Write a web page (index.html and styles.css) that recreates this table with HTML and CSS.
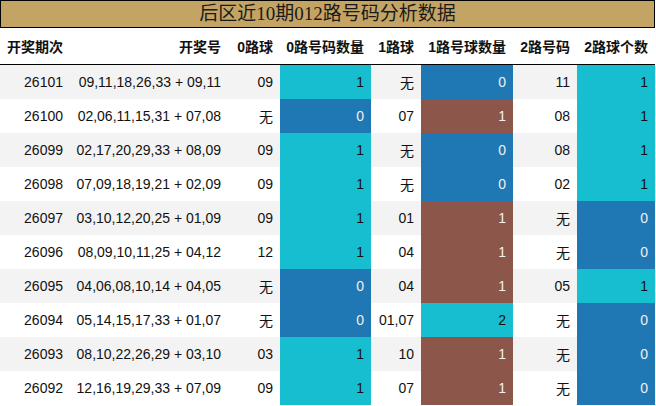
FILE: index.html
```html
<!DOCTYPE html>
<html lang="zh">
<head>
<meta charset="utf-8">
<link rel="stylesheet" href="styles.css">
</head>
<body>
<div class="wrap">
  <div class="title">后区近10期012路号码分析数据</div>
  <table class="grid">
    <colgroup>
      <col class="w1"><col class="w2"><col class="w3"><col class="w4"><col class="w5"><col class="w6"><col class="w7"><col class="w8">
    </colgroup>
    <thead>
      <tr><th>开奖期次</th><th>开奖号</th><th>0路球</th><th>0路号码数量</th><th>1路球</th><th>1路号球数量</th><th>2路号码</th><th>2路球个数</th></tr>
    </thead>
    <tbody>
      <tr><td>26101</td><td>09,11,18,26,33 + 09,11</td><td>09</td><td class="teal">1</td><td>无</td><td class="blue">0</td><td>11</td><td class="teal">1</td></tr>
      <tr><td>26100</td><td>02,06,11,15,31 + 07,08</td><td>无</td><td class="blue">0</td><td>07</td><td class="brown">1</td><td>08</td><td class="teal">1</td></tr>
      <tr><td>26099</td><td>02,17,20,29,33 + 08,09</td><td>09</td><td class="teal">1</td><td>无</td><td class="blue">0</td><td>08</td><td class="teal">1</td></tr>
      <tr><td>26098</td><td>07,09,18,19,21 + 02,09</td><td>09</td><td class="teal">1</td><td>无</td><td class="blue">0</td><td>02</td><td class="teal">1</td></tr>
      <tr><td>26097</td><td>03,10,12,20,25 + 01,09</td><td>09</td><td class="teal">1</td><td>01</td><td class="brown">1</td><td>无</td><td class="blue">0</td></tr>
      <tr><td>26096</td><td>08,09,10,11,25 + 04,12</td><td>12</td><td class="teal">1</td><td>04</td><td class="brown">1</td><td>无</td><td class="blue">0</td></tr>
      <tr><td>26095</td><td>04,06,08,10,14 + 04,05</td><td>无</td><td class="blue">0</td><td>04</td><td class="brown">1</td><td>05</td><td class="teal">1</td></tr>
      <tr><td>26094</td><td>05,14,15,17,33 + 01,07</td><td>无</td><td class="blue">0</td><td>01,07</td><td class="teal">2</td><td>无</td><td class="blue">0</td></tr>
      <tr><td>26093</td><td>08,10,22,26,29 + 03,10</td><td>03</td><td class="teal">1</td><td>10</td><td class="brown">1</td><td>无</td><td class="blue">0</td></tr>
      <tr><td>26092</td><td>12,16,19,29,33 + 07,09</td><td>09</td><td class="teal">1</td><td>07</td><td class="brown">1</td><td>无</td><td class="blue">0</td></tr>
    </tbody>
  </table>
</div>
</body>
</html>
```
FILE: styles.css
```css
html, body {
  margin: 0;
  padding: 0;
  background: #ffffff;
}
.wrap {
  width: 655px;
  font-family: "Liberation Sans", "Noto Sans CJK SC", sans-serif;
  color: #111;
}
.title {
  height: 26px;
  line-height: 26px;
  border: 1px solid #000;
  background: #c3a464;
  text-align: center;
  font-family: "Liberation Serif", "Noto Sans CJK SC", serif;
  font-size: 19px;
  color: #1a1a1a;
}
.grid {
  width: 655px;
  table-layout: fixed;
  border-collapse: collapse;
  border-spacing: 0;
}
.w1 { width: 70px; }
.w2 { width: 158px; }
.w3 { width: 52px; }
.w4 { width: 91px; }
.w5 { width: 50px; }
.w6 { width: 92px; }
.w7 { width: 64px; }
.w8 { width: 78px; }
.grid th {
  height: 36px;
  padding: 0 7px 0 0;
  text-align: right;
  font-size: 14px;
  font-weight: bold;
  border-bottom: 1px solid #000;
  white-space: nowrap;
}
.grid td {
  height: 34px;
  padding: 0 7px 0 0;
  text-align: right;
  font-size: 14px;
  white-space: nowrap;
}
.grid tbody tr:nth-child(odd) {
  background: #f3f3f3;
}
.grid td.teal {
  background: #17becf;
  color: #111;
}
.grid td.blue {
  background: #1f77b4;
  color: #f1f1f1;
}
.grid td.brown {
  background: #8c564b;
  color: #f1f1f1;
}
```
